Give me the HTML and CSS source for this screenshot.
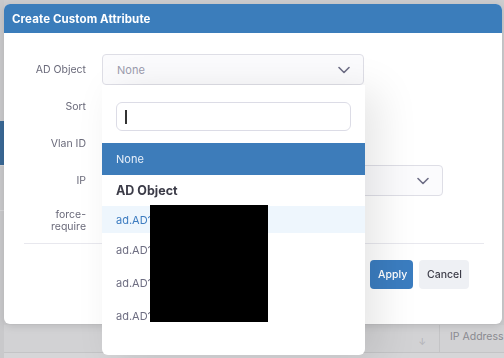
FILE: index.html
```html
<!DOCTYPE html>
<html lang="en">

<head>
    <meta charset="UTF-8">
    <title>Create Custom Attribute</title>
    <link rel="stylesheet" href="styles.css">
</head>

<body>
    <div class="page">
        <div class="sidebar">
            <div class="side-item active"></div>
            <div class="side-item"></div>
        </div>
        <div class="main">
            <div class="thead">
                <div class="th th-sort"><span class="sort-arrow">&darr;</span></div>
                <div class="th th-ip">IP Address</div>
            </div>
            <div class="trow"></div>
        </div>
    </div>

    <div class="modal">
        <div class="modal-head">Create Custom Attribute</div>
        <div class="modal-body">
            <div class="row">
                <span class="label">AD Object</span>
                <div class="select-holder">
                    <div class="select select-short">
                        <span class="placeholder">None</span>
                        <svg class="chevron" width="12" height="8" viewBox="0 0 12 8"><path d="M1 1.5l5 5 5-5" fill="none" stroke="#6e6e86" stroke-width="1.6" stroke-linecap="round" stroke-linejoin="round"/></svg>
                    </div>
                    <div class="dropdown">
                        <div class="search-row">
                            <div class="search"><span class="caret"></span></div>
                        </div>
                        <div class="option selected">None</div>
                        <div class="group">AD Object</div>
                        <div class="option hovered">ad.AD1</div>
                        <div class="option">ad.AD1</div>
                        <div class="option">ad.AD1</div>
                        <div class="option">ad.AD1</div>
                        <div class="redacted"></div>
                    </div>
                </div>
            </div>
            <div class="row">
                <span class="label">Sort</span>
                <div class="select"></div>
            </div>
            <div class="row">
                <span class="label">Vlan ID</span>
                <div class="select"></div>
            </div>
            <div class="row">
                <span class="label">IP</span>
                <div class="select select-wide">
                    <span class="placeholder"></span>
                    <svg class="chevron" width="12" height="8" viewBox="0 0 12 8"><path d="M1 1.5l5 5 5-5" fill="none" stroke="#6e6e86" stroke-width="1.6" stroke-linecap="round" stroke-linejoin="round"/></svg>
                </div>
            </div>
            <div class="row row-tall">
                <span class="label">force-<br>require</span>
                <div class="check"></div>
            </div>
        </div>
        <div class="modal-foot">
            <button class="btn btn-apply">Apply</button>
            <button class="btn btn-cancel">Cancel</button>
        </div>
    </div>
</body>

</html>
```

FILE: styles.css
```css
* {
    box-sizing: border-box;
}

body {
    margin: 0;
    font-family: "Inter", "Noto Sans", sans-serif;
    background: #cdcdcf;
    overflow: hidden;
}

/* page behind the overlay (already dimmed) */
.page {
    height: 100vh;
    display: flex;
}

.sidebar {
    width: 4px;
    padding-top: 121px;
    background: #c9c9cb;
}

.side-item {
    height: 45px;
    border-bottom: 1px solid #d6d6d8;
}

.side-item.active {
    background: #3a6996;
}

.main {
    flex: 1;
    display: flex;
    flex-direction: column;
    justify-content: flex-end;
}

.thead {
    height: 28px;
    display: flex;
    justify-content: flex-end;
    background: #d2d2d4;
    border-bottom: 1px solid #c4c4c6;
}

.th {
    padding: 5px 10px;
    font-size: 11px;
    color: #8a8a90;
    white-space: nowrap;
}

.th-sort {
    width: 60px;
    padding-right: 13px;
    text-align: right;
}

.th-ip {
    width: 65px;
    padding: 5px 0 5px 10px;
    font-size: 10.5px;
    border-left: 1px solid #c4c4c6;
}

.sort-arrow {
    font-size: 9px;
    color: #b0b0b4;
    position: relative;
    top: 4px;
}

.trow {
    height: 5px;
    background: #d6d6d8;
}

/* modal */
.modal {
    position: fixed;
    top: 4px;
    left: 4px;
    width: 498px;
    height: 320px;
    background: #fff;
    border-radius: 6px;
    box-shadow: 0 2px 8px rgba(0, 0, 0, 0.12);
}

.modal-head {
    height: 29px;
    padding: 8px 8px 0;
    background: #3b7dbb;
    border-radius: 6px 6px 0 0;
    color: #fff;
    font-size: 11.5px;
    font-weight: 700;
    letter-spacing: 0.1px;
}

.modal-body {
    padding-top: 21px;
    display: flex;
    flex-direction: column;
    gap: 6px;
    height: 211px;
    border-bottom: 1px solid #e8e8ee;
    margin: 0 18px 0 20px;
}

.row {
    display: flex;
    align-items: center;
    gap: 16px;
    height: 31px;
}

.row-tall {
    height: 38px;
}

.label {
    width: 62px;
    text-align: right;
    font-size: 10.5px;
    line-height: 12px;
    color: #6a6a7a;
}

.select-holder {
    position: relative;
}

.select {
    width: 262px;
    height: 31px;
    display: flex;
    align-items: center;
    justify-content: space-between;
    padding: 0 13px 0 14px;
    border: 1px solid #dedee6;
    border-radius: 4px;
    background: #fbfbfd;
}

.select-wide {
    width: 341px;
}

.placeholder {
    font-size: 11px;
    color: #9c9cae;
}

.check {
    width: 14px;
    height: 14px;
}

/* open dropdown of the AD Object select */
.dropdown {
    position: absolute;
    top: 31px;
    left: 0;
    width: 263px;
    height: 270px;
    background: #fff;
    border-radius: 0 0 6px 6px;
    box-shadow: 14px 6px 40px rgba(0, 0, 0, 0.1);
    overflow: hidden;
    z-index: 2;
}

.search-row {
    padding: 17px 14px 12px;
}

.search {
    height: 29px;
    border: 1px solid #dcdce6;
    border-radius: 6px;
    padding: 7px 8px;
}

.caret {
    display: block;
    width: 1.5px;
    height: 14px;
    background: #333;
}

.option {
    height: 33px;
    padding: 0 14px;
    display: flex;
    align-items: center;
    font-size: 11px;
    color: #6e6e82;
}

.option.selected {
    height: 32px;
    background: #3d7cba;
    color: #e8f0fa;
}

.option.hovered {
    height: 27px;
    margin-top: 4px;
    background: #eef6fd;
    color: #3d7cc0;
}

.group {
    height: 27px;
    padding: 8px 14px 0;
    font-size: 12.5px;
    font-weight: 700;
    color: #3c3c48;
}

.redacted {
    position: absolute;
    left: 48px;
    top: 120px;
    width: 118px;
    height: 117px;
    background: #000;
}

.modal-foot {
    display: flex;
    justify-content: flex-end;
    gap: 6px;
    padding: 16px 33px 0 0;
}

.btn {
    height: 29px;
    border: 0;
    border-radius: 4px;
    font-family: inherit;
    font-size: 10.5px;
    font-weight: 500;
    padding: 0 8px;
}

.btn-apply {
    width: 43px;
    background: #3b7dc0;
    color: #fff;
}

.btn-cancel {
    width: 50px;
    background: #eef0f4;
    color: #3c3c48;
}
```
